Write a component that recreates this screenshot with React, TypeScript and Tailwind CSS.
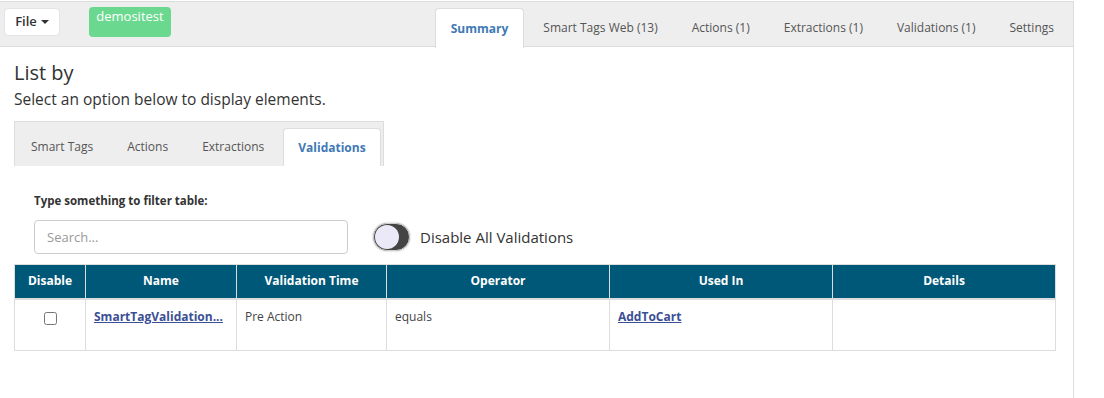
import React from 'react'

const TOP_TABS = ['Summary', 'Smart Tags Web (13)', 'Actions (1)', 'Extractions (1)', 'Validations (1)', 'Settings']
const SUB_TABS = ['Smart Tags', 'Actions', 'Extractions', 'Validations']

const COLUMNS = [
  { label: 'Disable', w: 'w-[71px]' },
  { label: 'Name', w: 'w-[151px]' },
  { label: 'Validation Time', w: 'w-[150px]' },
  { label: 'Operator', w: 'w-[223px]' },
  { label: 'Used In', w: 'w-[223px]' },
  { label: 'Details', w: 'w-[223px]' },
]

export default function App() {
  return (
    <div className="w-[1104px] h-[398px] bg-white overflow-hidden text-[#333]" style={{ fontFamily: '"Open Sans", sans-serif' }}>
      <div className="w-[1074px] h-[398px] border-r border-[#ddd]">
        {/* top bar */}
        <div className="mt-px h-[46px] bg-[#eee] border-t border-b border-[#ddd] flex items-start">
          <button className="ml-1 mt-[6px] w-[56px] h-[28px] bg-white border border-[#e4e4e4] rounded-sm text-[13px] font-semibold text-[#333] flex items-center justify-center gap-1">
            File
            <span className="w-0 h-0 border-l-[4px] border-r-[4px] border-t-[4px] border-l-transparent border-r-transparent border-t-[#333]" />
          </button>
          <div className="ml-[29px] mt-[5px] w-[82px] h-[30px] rounded bg-[#6ad98f] text-white text-[13px] text-center leading-[18px]">
            demositest
          </div>
          <div className="ml-auto mr-[2px] mt-[6px] flex items-stretch h-[39px]">
            {TOP_TABS.map((t, i) => (
              <div
                key={t}
                className={
                  i === 0
                    ? 'mr-[2px] px-[15px] bg-white border border-b-0 border-[#ddd] rounded-t flex items-center text-[12px] font-bold text-[#3f79b5] -mb-px whitespace-nowrap'
                    : 'px-[17px] flex items-center text-[12px] text-[#555] whitespace-nowrap'
                }
              >
                {t}
              </div>
            ))}
          </div>
        </div>

        <div className="px-[14px]">
          <h1 className="mt-[13px] text-[20px] leading-[26px] text-[#333]">List by</h1>
          <p className="mt-[3px] text-[15.5px] leading-[20px] text-[#333]">Select an option below to display elements.</p>

          {/* sub tabs */}
          <div className="mt-[12px] w-[370px] h-[45px] bg-[#eee] border border-b-0 border-[#ddd] flex items-end pl-0">
            {SUB_TABS.map((t, i) => (
              <div
                key={t}
                className={
                  i === 3
                    ? 'shrink-0 whitespace-nowrap ml-[2px] px-[14px] h-[38px] bg-white border border-b-0 border-[#ddd] rounded-t flex items-center justify-center text-[12px] font-bold text-[#3f79b5]'
                    : i === 0
                      ? 'shrink-0 whitespace-nowrap pl-[16px] pr-[17px] h-[38px] flex items-center text-[12px] text-[#555]'
                      : 'shrink-0 whitespace-nowrap px-[17px] h-[38px] flex items-center text-[12px] text-[#555]'
                }
              >
                {t}
              </div>
            ))}
          </div>

          <div className="pl-[20px] pt-[27px]">
            <div className="text-[11.5px] font-bold text-[#333] leading-[16px]">Type something to filter table:</div>
            <div className="mt-[11px] flex items-center">
              <input
                placeholder="Search..."
                className="w-[314px] h-[34px] border border-[#ccc] rounded px-3 text-[13px] placeholder:text-[#999] outline-none"
              />
              <div className="ml-[25px] w-[37px] h-[28px] rounded-full bg-[#444] border border-[#ccc] relative shadow-[0_0_2px_rgba(0,0,0,0.3)]">
                <span className="absolute left-[1px] top-[1px] w-[24px] h-[24px] rounded-full bg-[#ebe9f7]" />
              </div>
              <span className="ml-[10px] text-[15px] text-[#333]">Disable All Validations</span>
            </div>
          </div>

          {/* table */}
          <table className="mt-[10px] w-[1042px] border-collapse text-[12px]">
            <thead>
              <tr className="bg-[#005878] text-white h-[34px]">
                {COLUMNS.map(c => (
                  <th key={c.label} className={`${c.w} border border-[#ddd] font-bold text-center`}>{c.label}</th>
                ))}
              </tr>
            </thead>
            <tbody>
              <tr className="h-[52px] align-top">
                <td className="border border-[#ddd] border-t-2 text-center pt-[12px]">
                  <input type="checkbox" className="w-[13px] h-[13px] accent-white" />
                </td>
                <td className="border border-[#ddd] border-t-2 px-2 pt-[8px]">
                  <a className="font-bold text-[#3b4f95] underline whitespace-nowrap">SmartTagValidation...</a>
                </td>
                <td className="border border-[#ddd] border-t-2 px-2 pt-[8px] text-[#444]">Pre Action</td>
                <td className="border border-[#ddd] border-t-2 px-2 pt-[8px] text-[#444]">equals</td>
                <td className="border border-[#ddd] border-t-2 px-2 pt-[8px]">
                  <a className="font-bold text-[#3b4f95] underline">AddToCart</a>
                </td>
                <td className="border border-[#ddd] border-t-2"></td>
              </tr>
            </tbody>
          </table>
        </div>
      </div>
    </div>
  )
}
